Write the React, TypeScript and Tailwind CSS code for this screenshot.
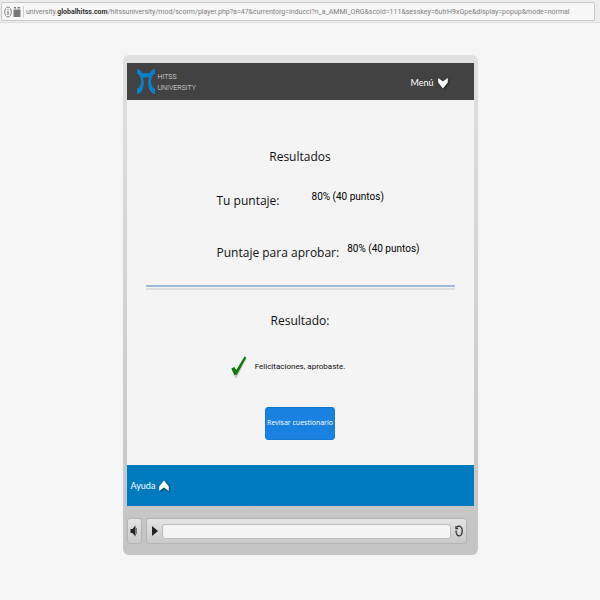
import React from "react";

const sans = "font-['Open_Sans','Noto_Sans',sans-serif]";
const small = "font-['Roboto','Open_Sans',sans-serif]";

function AddressBar() {
  return (
    <header className="h-[23px] border-b border-[#dedede] bg-[#ececec] pt-[2px] pr-[5px] pl-px">
      <div className="relative flex h-[19px] items-center rounded-[2px] border border-[#c9c9c4] bg-[#f7f7f7] pl-[2px]">
        <svg className="h-3 w-2" viewBox="0 0 8 12" fill="none" stroke="#777" aria-hidden="true">
          <ellipse cx="4" cy="6" rx="3.3" ry="5" strokeWidth="0.9" />
          <path d="M4 5v4M4 3v1" strokeWidth="1.2" />
        </svg>
        <svg className="ml-px h-3 w-2" viewBox="0 0 8 12" fill="#777" aria-hidden="true">
          <path d="M.5 3.500h7V11h-7zM1 1h2v1.500H1zM4.500 1h2.500v1.500H4.500z" />
        </svg>
        <span className="mr-[2px] ml-[2px] h-3 w-px bg-[#d0d0d0]" />
        <label
          htmlFor="address"
          className={`${small} flex-1 text-[7px] leading-4 whitespace-nowrap text-[#808080]`}
        >
          university.<span className="font-bold text-[#333]">globalhitss.com</span>
          /hitssuniversity/mod/scorm/player.php?a=47&amp;currentorg=inducci?n_a_AMMI_ORG&amp;scoid=111&amp;sesskey=6utrH9xGpe&amp;display=popup&amp;mode=normal
        </label>
        <input id="address" type="text" className="absolute inset-y-0 right-0 left-6 bg-transparent outline-none" />
      </div>
    </header>
  );
}

function Logo() {
  return (
    <div className="flex items-center gap-[3px]">
      <svg className="h-[25px] w-[18px]" viewBox="0 0 18 25" fill="#0a80c8" aria-hidden="true">
        <path d="M0 0c2.200.4 4.200 1.700 5.500 4.300h7C13.800 1.700 15.800.4 18 0v4.800c-1.200.3-2.200 1.200-2.900 2.600-1.400 3-1.400 6.600 0 9.600.7 1.500 1.700 2.400 2.900 2.700V25c-3-.5-5-2.500-6-5.600-1.200-3.600-1.100-7.400.1-11H5.900c1.200 3.600 1.300 7.400.1 11C5 22.500 3 24.500 0 25v-5.300c1.200-.3 2.200-1.200 2.900-2.700 1.400-3 1.400-6.600 0-9.600C2.200 6 1.200 5.100 0 4.800z" />
      </svg>
      <p className={`${small} pt-[3px] text-[7px] leading-[11px] font-light text-[#e0e0e0]`}>
        HITSS
        <br />
        UNIVERSITY
      </p>
    </div>
  );
}

function Chevron({ up = false }: { up?: boolean }) {
  return (
    <svg
      className="h-3 w-[10px] overflow-visible drop-shadow-[1px_1px_1px_rgba(0,0,0,0.5)]"
      viewBox="0 0 10 12"
      fill="#fff"
      aria-hidden="true"
    >
      <path d={up ? "M5 .5l4.800 6V11L5 7.500.2 11V6.500z" : "M5 11.500l4.800-6V1L5 4.500.2 1v4.500z"} />
    </svg>
  );
}

function Score({ label, value, gap }: { label: string; value: string; gap: string }) {
  return (
    <div className={`flex whitespace-nowrap ${gap}`}>
      <dt className="text-xs leading-6">{label}</dt>
      <dd className={`${small} text-[10px] leading-4 text-black`}>{value}</dd>
    </div>
  );
}

function Results() {
  return (
    <main className={`${sans} flex flex-col bg-[#f4f4f4] pt-[45px] pb-[25px] text-[#111]`}>
      <h1 className="text-center text-xs leading-6">Resultados</h1>
      <dl className="mt-5 ml-[90px] flex flex-col gap-7">
        <Score label="Tu puntaje:" value="80% (40 puntos)" gap="gap-8" />
        <Score label="Puntaje para aprobar:" value="80% (40 puntos)" gap="gap-2" />
      </dl>
      <hr className="mx-[19px] mt-5 h-[5px] border-t-2 border-b-2 border-t-[#9fb9da] border-b-[#dedede]" />
      <h2 className="mt-[19px] text-center text-xs leading-6">Resultado:</h2>
      <div className="mt-[22px] flex items-center justify-center gap-2 pr-6">
        <svg className="h-6 w-4" viewBox="0 0 16 24" aria-hidden="true">
          <path d="M1 15l3-1 2 3L14.500 3l1 1L5.500 23H4z" fill="#c8c8c8" />
          <path d="M.3 13.500l3-1.500 2 3L13.500 1.500l1.800 1L6 19.500l-2.500.8z" fill="#087d08" />
        </svg>
        <p className={`${small} text-[8px] leading-4`}>Felicitaciones, aprobaste.</p>
      </div>
      <button
        type="button"
        className="mt-7 h-[33px] self-center rounded-[3px] border border-[#1478d0] bg-[#1982e0] px-px text-[7px] whitespace-nowrap text-white"
      >
        Revisar cuestionario
      </button>
    </main>
  );
}

const control =
  "border border-[#b4b4b4] bg-linear-to-b from-[#e4e4e4] to-[#c9c9c9] shadow-[0_0_1px_#bbb]";

function Controls() {
  return (
    <div className="mt-3 flex h-[26px] gap-1 pr-[7px]">
      <button type="button" aria-label="Volumen" className={`${control} flex w-[15px] items-center justify-center rounded-[3px]`}>
        <svg className="h-3 w-2" viewBox="0 0 8 12" aria-hidden="true">
          <path d="M.5 4h2L5.500.500v11L2.500 8h-2z" fill="#222" />
          <path d="M6.500 3v6" stroke="#777" fill="none" />
        </svg>
      </button>
      <div className={`${control} flex flex-1 items-center rounded-[3px] pr-[3px] pl-[5px]`}>
        <button type="button" aria-label="Reproducir">
          <svg className="h-[10px] w-[6px]" viewBox="0 0 6 10" fill="#222" aria-hidden="true">
            <path d="M0 0l6 5-6 5z" />
          </svg>
        </button>
        <input
          type="range"
          aria-label="Progreso"
          defaultValue={0}
          className="mx-1 h-[15px] min-w-0 flex-1 appearance-none rounded-[3px] border border-[#bcbcbc] bg-[#f4f4f4] [&::-webkit-slider-thumb]:h-0 [&::-webkit-slider-thumb]:w-0 [&::-webkit-slider-thumb]:appearance-none"
        />
        <button type="button" aria-label="Repetir">
          <svg className="h-3 w-2" viewBox="0 0 8 12" fill="none" stroke="#333" strokeWidth="1.300" aria-hidden="true">
            <path d="M2 2.200C3 .5 5.500.700 6.400 2.500c1 2 1 5 0 7C5.500 11.200 3 11.300 2 9.600 1.200 8.500 1 7 1 5.500" />
            <path d="M1 1v2.500h2.200" />
          </svg>
        </button>
      </div>
    </div>
  );
}

export default function App() {
  return (
    <div className="min-h-screen bg-[#f5f5f5]">
      <AddressBar />
      <section
        aria-label="HITSS University"
        className="mx-auto mt-8 w-full max-w-[355px] rounded-[6px] bg-linear-to-b from-[#e0e0e0] to-[#c4c4c4] px-1 pt-2 pb-[11px]"
      >
        <nav className="flex h-[37px] items-center justify-between bg-[#424242] pr-[26px] pl-[10px]">
          <Logo />
          <button type="button" className="flex items-center gap-1 pt-[3px] font-['Lato',sans-serif] text-[9px] leading-4 text-white">
            Menú <Chevron />
          </button>
        </nav>
        <Results />
        <footer className="flex h-[41px] items-center bg-[#007bc0] px-1">
          <button type="button" className="flex items-center gap-1 font-['Lato',sans-serif] text-[9px] leading-4 text-white">
            Ayuda <Chevron up />
          </button>
        </footer>
        <Controls />
      </section>
    </div>
  );
}
